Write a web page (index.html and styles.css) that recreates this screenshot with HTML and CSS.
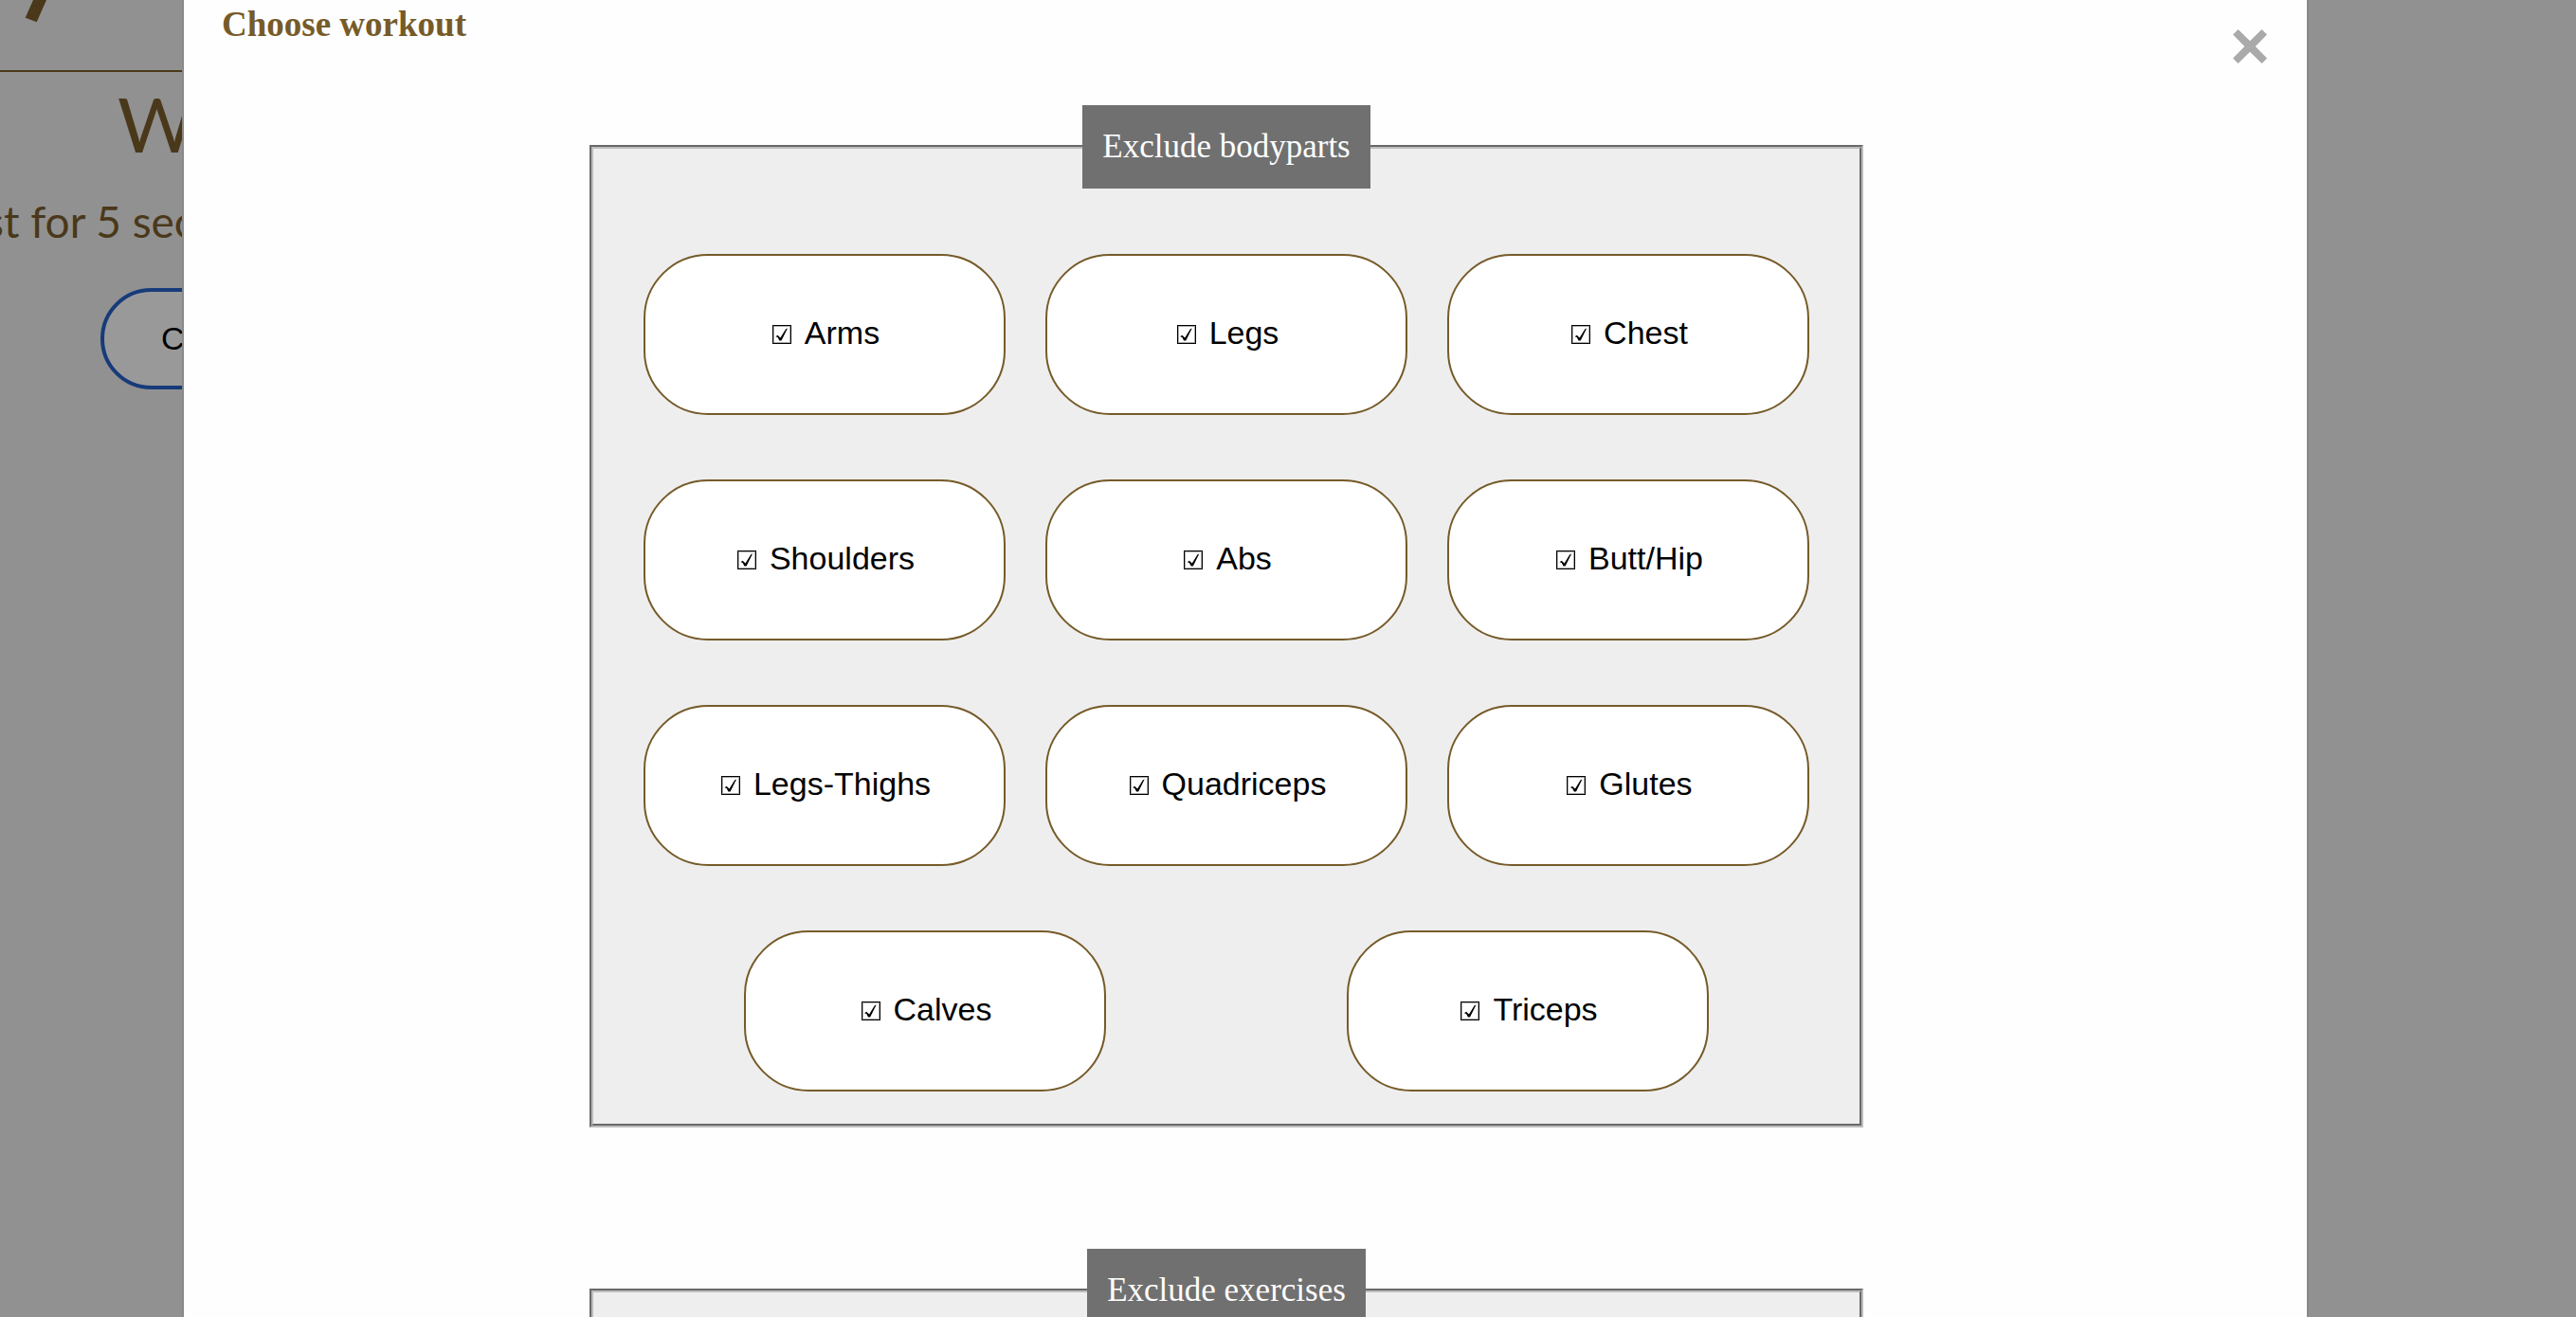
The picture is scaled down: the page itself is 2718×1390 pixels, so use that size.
FILE: index.html
```html
<!DOCTYPE html>
<html lang="en">
<head>
<meta charset="utf-8">
<title>Choose workout</title>
<link rel="stylesheet" href="styles.css">
</head>
<body>
<div class="page">
  <section class="timer">
    <div class="timer-brand">
      <svg class="brand-tail" width="60" height="26" viewBox="0 0 60 26" aria-hidden="true"><path d="M35 0H49L38.700 23.300L26.700 18.700Z"/></svg>
    </div>
    <h1 class="timer-title">W</h1>
    <p class="timer-status">st for 5 sec</p>
    <button class="timer-button" type="button">C</button>
  </section>
  <main class="modal">
    <header class="modal-header">
      <h2 class="modal-title">Choose workout</h2>
      <button class="close" type="button" aria-label="Close">
        <svg width="36" height="36" viewBox="0 0 36 36" aria-hidden="true"><path d="M5.500 0L18 12.300L30.500 0L36 5.500L23.700 18L36 30.500L30.500 36L18 23.700L5.500 36L0 30.500L12.300 18L0 5.500Z"/></svg>
      </button>
    </header>
    <form class="filters">
      <fieldset class="group">
        <legend class="group-title">Exclude bodyparts</legend>
        <div class="options">
          <label class="option"><input class="tick" type="checkbox" checked>Arms</label>
          <label class="option"><input class="tick" type="checkbox" checked>Legs</label>
          <label class="option"><input class="tick" type="checkbox" checked>Chest</label>
          <label class="option"><input class="tick" type="checkbox" checked>Shoulders</label>
          <label class="option"><input class="tick" type="checkbox" checked>Abs</label>
          <label class="option"><input class="tick" type="checkbox" checked>Butt/Hip</label>
          <label class="option"><input class="tick" type="checkbox" checked>Legs-Thighs</label>
          <label class="option"><input class="tick" type="checkbox" checked>Quadriceps</label>
          <label class="option"><input class="tick" type="checkbox" checked>Glutes</label>
          <label class="option"><input class="tick" type="checkbox" checked>Calves</label>
          <label class="option"><input class="tick" type="checkbox" checked>Triceps</label>
        </div>
      </fieldset>
      <fieldset class="group">
        <legend class="group-title">Exclude exercises</legend>
        <div class="options"></div>
      </fieldset>
    </form>
  </main>
</div>
</body>
</html>
```
FILE: styles.css
```css
* {
  box-sizing: border-box;
}

body {
  margin: 0;
  background: #919191;
  font-family: "Liberation Serif", "Times New Roman", serif;
}

.page {
  display: flex;
  height: 100vh;
  padding-right: 282px;
  overflow: hidden;
}

/* Timer screen, dimmed behind the dialog */
.timer {
  flex: 0 0 192px;
  overflow: hidden;
  white-space: nowrap;
  color: #4a381a;
  font-family: Lato, "Gill Sans", sans-serif;
}

.timer-brand {
  height: 76px;
  border-bottom: 2px solid #4a381a;
}

.brand-tail {
  display: block;
  fill: #4a381a;
}

.timer-title {
  margin: 0 0 0 124px;
  font-size: 80px;
  font-weight: 400;
  line-height: 108px;
}

.timer-status {
  margin: 20px 0 0 -16px;
  font-size: 46px;
  line-height: 60px;
}

.timer-button {
  display: block;
  width: 240px;
  height: 107px;
  margin: 40px 0 0 106px;
  padding: 0 0 0 60px;
  border: 4px solid #173b7a;
  border-radius: 54px;
  background: #999;
  color: #000;
  font-family: "Liberation Sans", Arial, sans-serif;
  font-size: 34px;
  text-align: left;
}

/* Dialog */
.modal {
  flex: 1;
  border: solid #888;
  border-width: 0 2px;
  background: #fefefe;
  overflow: hidden;
}

.modal-header {
  display: flex;
  justify-content: space-between;
  align-items: flex-start;
  height: 111px;
  padding: 0 42px 0 40px;
}

.modal-title {
  margin: 4px 0 0;
  color: #765b29;
  font-size: 37px;
  line-height: 44px;
}

.close {
  margin: 31px 0 0;
  padding: 0;
  border: 0;
  background: none;
  fill: #aaa;
}

.close svg {
  display: block;
}

.filters {
  display: flex;
  flex-direction: column;
  gap: 128px;
  width: 60%;
  margin-left: 428px;
}

.group {
  min-width: 0;
  margin: 0;
  padding: 0;
  border: 4px groove #bdbdbd;
  background: #eee;
}

.group-title {
  margin: 0 auto;
  padding: 24px 21px;
  background: #707070;
  color: #fff;
  font-size: 35px;
  line-height: 40px;
}

.options {
  display: flex;
  flex-wrap: wrap;
  justify-content: space-around;
  row-gap: 68px;
  padding: 69px 32px 34px;
}

.option {
  display: flex;
  justify-content: center;
  align-items: baseline;
  gap: 14px;
  width: 382px;
  padding: 61px 0 65px;
  border: 2px solid #765b29;
  border-radius: 68px;
  background: #fff;
  color: #000;
  font-family: "Liberation Sans", Arial, sans-serif;
  font-size: 34px;
  line-height: 40px;
}

.tick {
  appearance: none;
  width: 20px;
  height: 20px;
  margin: 0 0 0 3px;
  border: 1px solid #000;
  box-shadow: inset 0 0 0 1px #aaa;
}

.tick:checked::after {
  content: "";
  display: block;
  height: 18px;
  background: #000;
  clip-path: polygon(14% 62%, 26% 54%, 42% 70%, 74% 18%, 84% 14%, 48% 86%, 36% 86%, 26% 66%);
}
```
